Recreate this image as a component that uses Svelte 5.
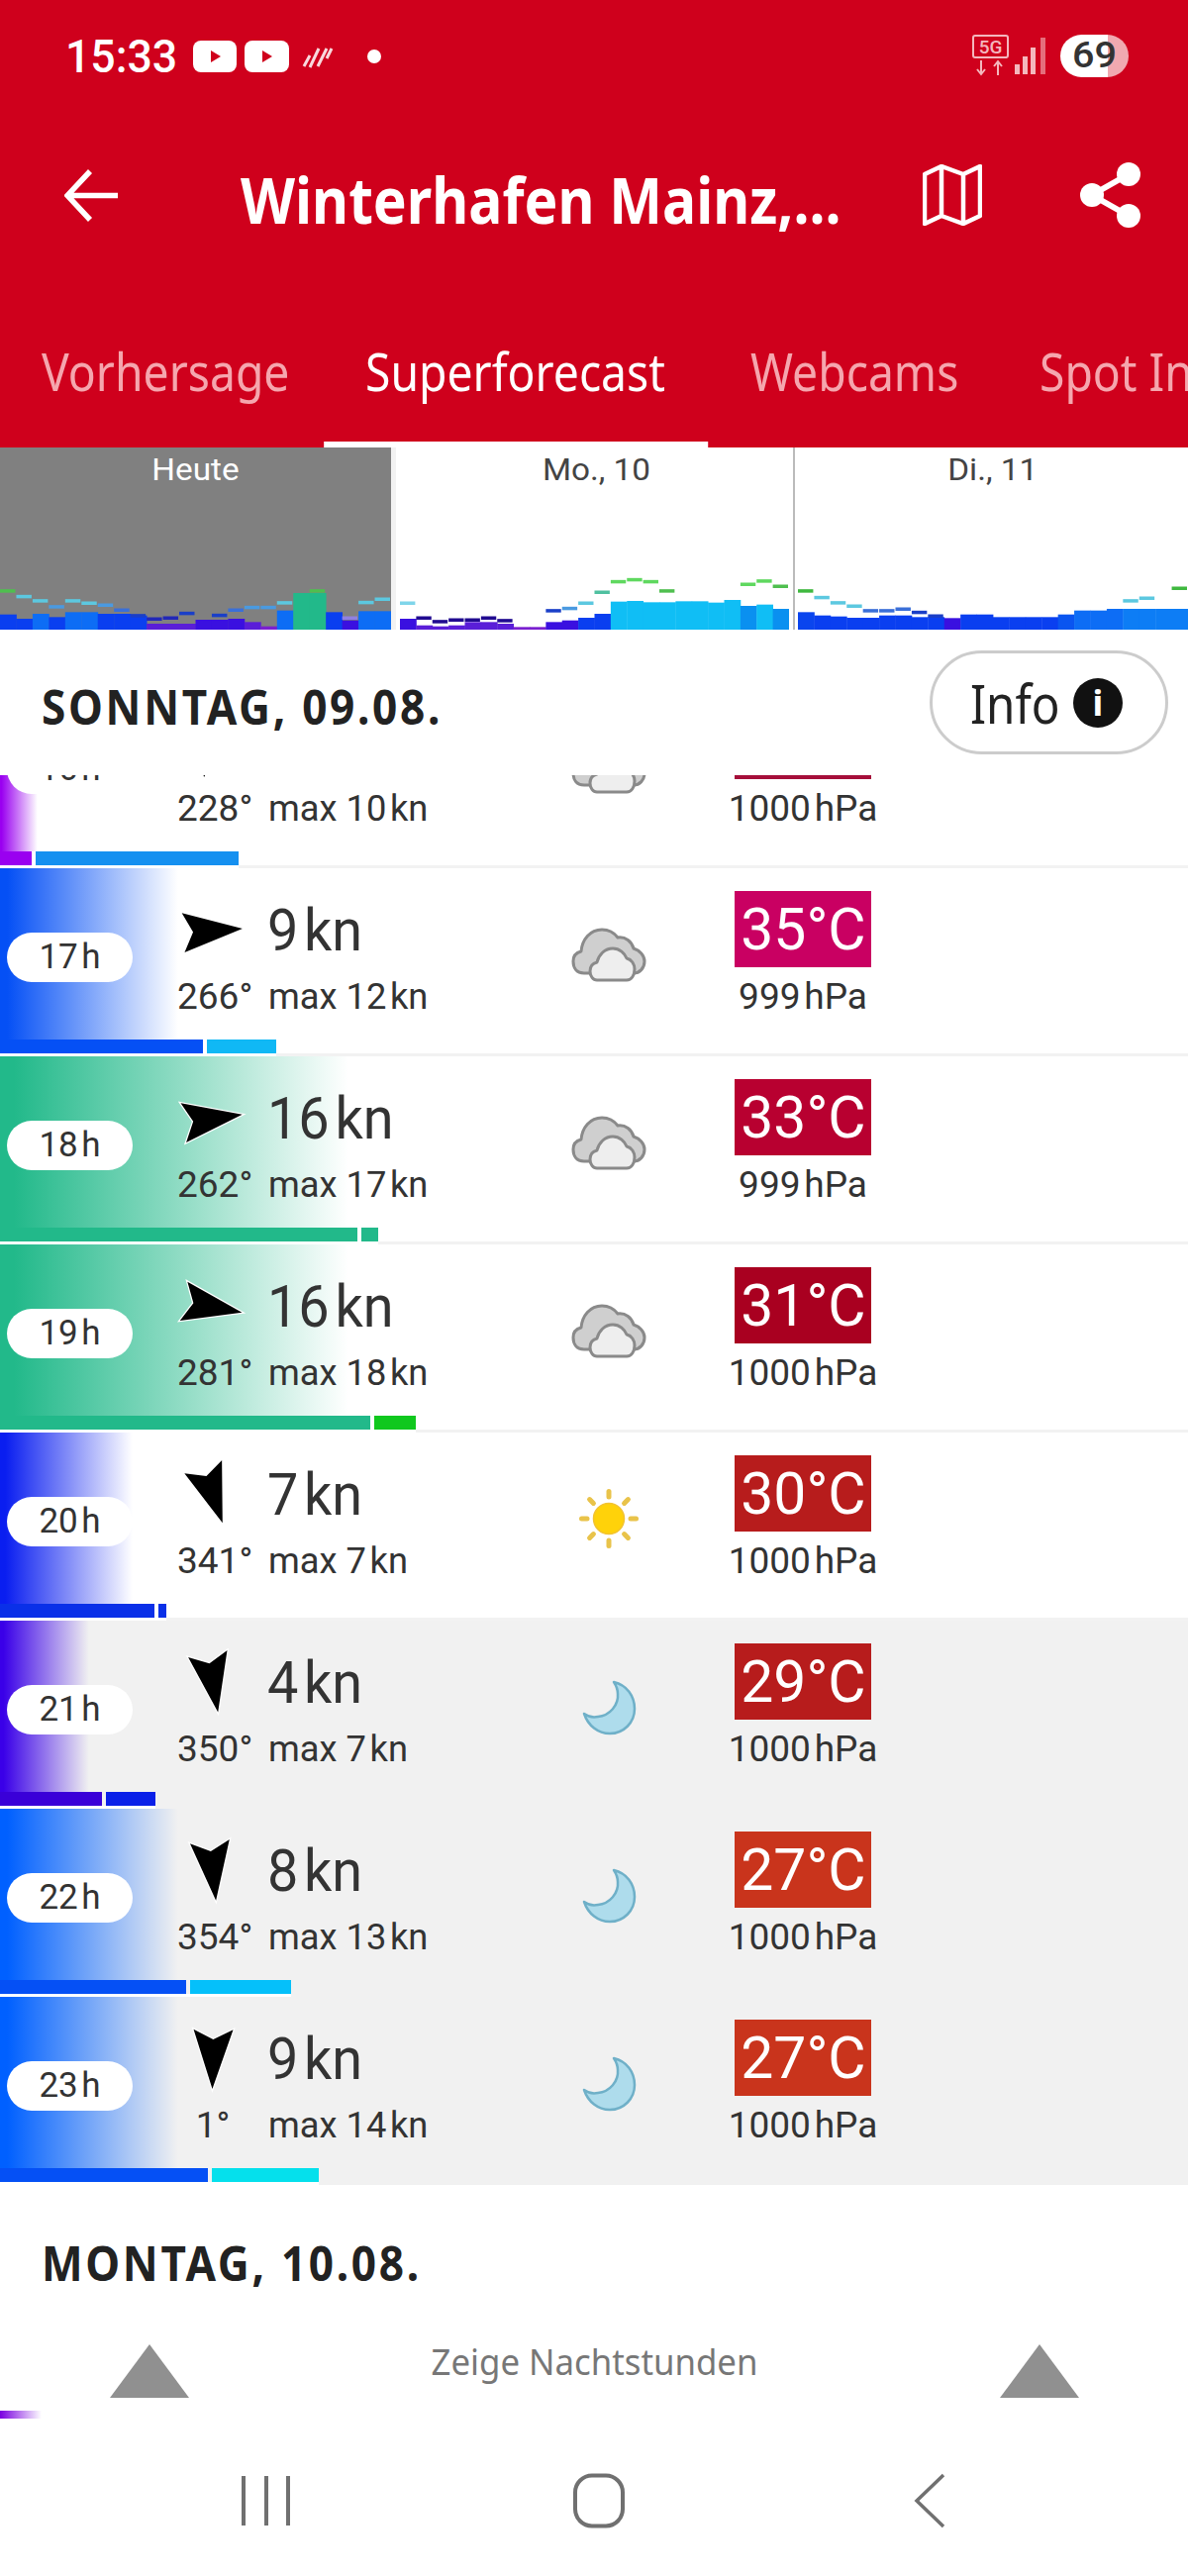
<script>
  const b='#0a3ff0',m='#0d6df5',p='#5a1ed8',v='#3a10e0',q='#7a20d0',g='#22b98a',c='#10bef5',s='#0a90f0';
  const G='#4fbf4f',H='#5fd85f',L='#5cc8e0',A='#4a9ae0',D='#3a6fd8',N='#1a3fc8',I='#2228b8',W='#9080e0',K='#200a90',T='#4fc0a0';
  const days=[
    {label:'Heute',cls:'today',w:395,off:0,
     bars:[[542,b],[555,b],[540,m],[550,b],[535,m],[535,m],[540,b],[540,b],[545,b],[570,p],[570,p],[570,p],[558,v],[558,v],[555,v],[565,p],[578,q],[530,m],[477,g],[477,g],[535,b],[560,v],[532,m],[532,m]],
     gust:[[470,G],[487,L],[500,L],[518,A],[500,L],[507,L],[513,A],[528,D],[545,N],[555,I],[552,I],[538,N],null,[544,N],[528,D],[520,A],[520,A],[506,L],null,[470,G],null,[552,W],[505,L],[495,L]]},
    {label:'Mo., 10',cls:'mon',w:393,off:4,
     bars:[[555,v],[575,p],[578,p],[575,p],[565,p],[565,p],[570,p],[580,q],[580,q],[565,v],[560,v],[552,b],[540,b],[503,c],[501,c],[505,c],[505,c],[502,c],[502,c],[506,c],[498,c],[516,s],[512,c],[525,s]],
     gust:[[507,'#7fd5ea'],[552,K],[563,K],[558,K],[558,K],[552,K],[560,K],null,null,[530,N],[523,A],[507,L],[474,T],[442,H],[436,H],[442,H],[470,G],null,null,null,null,[450,H],[440,H],[456,G]]},
    {label:'Di., 11',cls:'tue',w:394,off:4,
     bars:[[535,'#0a45ee'],[545,b],[548,b],[552,b],[552,b],[545,b],[545,b],[550,b],[550,b],[553,v],[542,b],[542,b],[550,b],[550,b],[550,b],[550,b],[542,'#0a55f0'],[530,m],[530,m],[525,m],[525,'#0d7df5'],[525,'#0d7df5'],[525,'#0d7df5'],[525,'#0d7df5']],
     gust:[[470,'#3fb83f'],[490,L],[506,L],[516,L],[530,D],[530,D],[525,D],[535,N],[546,N],null,null,null,null,null,null,null,null,null,null,null,[500,L],[492,L],null,[462,'#3fb83f']]}
  ];
  const rows=[
    {h:'16h',a:228,sp:'10',dir:'228°',max:'10',sky:'cloud',t:'32',tc:'#a50f3a',pr:'1000',c:'#9a00f0',gw:38,b1:32,b2:205,c1:'#9a00f0',c2:'#1590f0'},
    {h:'17h',a:266,sp:'9',dir:'266°',max:'12',sky:'cloud',t:'35',tc:'#c90062',pr:'999',c:'#0550f5',gw:180,b1:205,b2:70,c1:'#0550f5',c2:'#10b8f5'},
    {h:'18h',a:262,sp:'16',dir:'262°',max:'17',sky:'cloud',t:'33',tc:'#b80030',pr:'999',c:'#22b98a',gw:352,b1:361,b2:17,c1:'#22b98a',c2:'#22b98a'},
    {h:'19h',a:281,sp:'16',dir:'281°',max:'18',sky:'cloud',t:'31',tc:'#a90020',pr:'1000',c:'#22b98a',gw:352,b1:374,b2:42,c1:'#22b98a',c2:'#10c81e'},
    {h:'20h',a:341,sp:'7',dir:'341°',max:'7',sky:'sun',t:'30',tc:'#b71c1c',pr:'1000',c:'#0a1ef0',gw:134,b1:156,b2:8,c1:'#0a30e8',c2:'#0a30e8'},
    {h:'21h',a:350,sp:'4',dir:'350°',max:'7',sky:'moon',t:'29',tc:'#b71c1c',pr:'1000',c:'#3a00e8',gw:90,b1:103,b2:50,c1:'#3a00d8',c2:'#0a20e8',night:true},
    {h:'22h',a:354,sp:'8',dir:'354°',max:'13',sky:'moon',t:'27',tc:'#c9341c',pr:'1000',c:'#0060ff',gw:180,b1:188,b2:102,c1:'#0550f5',c2:'#05c0fa',night:true},
    {h:'23h',a:1,sp:'9',dir:'1°',max:'14',sky:'moon',t:'27',tc:'#c9341c',pr:'1000',c:'#0060ff',gw:180,b1:210,b2:108,c1:'#0550f5',c2:'#05e0ec',night:true}
  ];
  const rays=[0,45,90,135,180,225,270,315];
</script>

<div class="page">
  <header class="appbar">
    <div class="status">
      <span class="time">15:33</span>
      <svg class="st-left" width="200" height="40" viewBox="0 0 200 40" aria-hidden="true">
        <rect x="0" y="4" width="44" height="32" rx="8" fill="#fff"/><path d="M18 14l10 6-10 6z" fill="#cf001c"/>
        <rect x="52" y="4" width="45" height="32" rx="8" fill="#fff"/><path d="M70 14l10 6-10 6z" fill="#cf001c"/>
        <g stroke="#fff" stroke-width="3" fill="none" opacity=".85"><path d="M112 30l6-11M118 31l9-19M126 30l9-18M135 22l5-10"/></g>
        <circle cx="183" cy="20" r="7" fill="#fff"/>
      </svg>
      <svg class="st-right" width="80" height="44" viewBox="0 0 80 44" aria-hidden="true">
        <rect x="1" y="1" width="35" height="22" rx="2" fill="none" stroke="#f4b7bd" stroke-width="2"/>
        <text x="18.5" y="19" text-anchor="middle" font-family="Roboto,sans-serif" font-size="19" font-weight="500" fill="#f4b7bd">5G</text>
        <path d="M9 26v14M5 35l4 5 4-5M26 41V27M22 32l4-5 4 5" fill="none" stroke="#f4b7bd" stroke-width="2"/>
        <g fill="#f4b7bd"><rect x="43" y="30" width="5" height="10"/><rect x="51" y="22" width="5" height="18"/><rect x="59" y="13" width="5" height="27"/><rect x="69" y="3" width="5" height="37" opacity=".6"/></g>
      </svg>
      <span class="battery"><span class="batnum">69</span></span>
    </div>
    <div class="toolbar">
      <svg class="ic-back" width="54" height="53" viewBox="0 0 54 53" aria-hidden="true"><path d="M26 2L3 26.5 26 51M3 26.5h51" fill="none" stroke="#fff" stroke-width="5.5"/></svg>
      <h1 class="title"><span>Winterhafen Mainz,...</span></h1>
      <svg class="ic-map" width="60" height="62" viewBox="0 0 60 62" aria-hidden="true"><path d="M2 10l17-8 22 8 17-8v50l-17 8-22-8-17 8zM19 2v50M41 10v50" fill="none" stroke="#fff" stroke-width="4.5" stroke-linejoin="round"/></svg>
      <svg class="ic-share" width="62" height="68" viewBox="0 0 62 68" aria-hidden="true"><path d="M49 13L12 34l37 21" fill="none" stroke="#fff" stroke-width="6"/><circle cx="49" cy="13" r="12" fill="#fff"/><circle cx="12" cy="34" r="12" fill="#fff"/><circle cx="49" cy="55" r="12" fill="#fff"/></svg>
    </div>
    <nav class="tabs">
      <span class="tab t1">Vorhersage</span>
      <span class="tab t2 active">Superforecast</span>
      <span class="tab t3">Webcams</span>
      <span class="tab t4">Spot Info</span>
    </nav>
  </header>

  <section class="chart">
    {#each days as d}
      <div class="day {d.cls}">
        <span class="daylabel">{d.label}</span>
        <svg class="bars" width={d.w} height="60" viewBox="0 0 {d.w} 60" aria-hidden="true">
          {#each d.bars as bar,i}
            <rect x={i*d.w/24} y={60-(588-bar[0])/3} width={d.w/24+.4} height={(588-bar[0])/3} fill={bar[1]}/>
          {/each}
          {#each d.gust as gu,i}
            {#if gu}<rect x={i*d.w/24} y={60-(588-gu[0])/3-1.5} width={d.w/24-1} height="3.5" fill={gu[1]}/>{/if}
          {/each}
        </svg>
      </div>
    {/each}
  </section>

  <div class="dayhead">
    <h2 class="dayname"><span>SONNTAG, 09.08.</span></h2>
    <button class="info"><span class="infotxt">Info</span><span class="infoic">i</span></button>
  </div>

  <div class="list">
    <div class="rows">
      {#each rows as r}
        <article class="row" class:night={r.night}>
          <div class="grad" style="width:{r.gw}px;background:linear-gradient(90deg,{r.c} 4%,{r.c}00 100%)"></div>
          <div class="barline">
            <i style="width:{r.b1}px;background:{r.c1}"></i><i style="width:{r.b2}px;background:{r.c2}"></i>
          </div>
          <div class="hourcol"><span class="pill"><span class="sq">{r.h.slice(0,2)}&#8202;h</span></span></div>
          <div class="wind">
            <div class="l1">
              <span class="arrowcol">
                <svg width="72" height="70" viewBox="-36 -35 72 70" aria-hidden="true"><path d="M-20 -30L0 -20 20 -30 0 30Z" transform="rotate({r.a})" fill="#000" stroke="#fff" stroke-width="2.5" paint-order="stroke" stroke-linejoin="miter"/></svg>
              </span>
              <span class="speed">{r.sp}&#8202;kn</span>
            </div>
            <div class="l2">
              <span class="dir"><span class="sq">{r.dir}</span></span>
              <span class="max">max {r.max}&#8202;kn</span>
            </div>
          </div>
          <div class="sky">
            <svg width="74" height="74" viewBox="0 0 74 74" aria-hidden="true">
              {#if r.sky==='cloud'}
                <g transform="translate(0 11)" stroke="#8a8a8a" stroke-width="3" stroke-linejoin="round">
                  <path d="M12 45C4 45 1 39 1 33 1 27 5 24 9 23 10 11 18 1 30 1 38 1 43 5 46 9 54 8 60 13 62 20 68 22 73 27 73 33 73 40 68 45 62 45Z" fill="#cfcfcf"/>
                  <path d="M25 52C21 52 18 48 18 43 18 38 21 35 25 34 27 26 33 20 41 20 48 20 53 25 55 30 60 31 63 36 63 41 63 47 60 52 55 52Z" fill="#eeeeee"/>
                </g>
              {:else if r.sky==='sun'}
                {#each rays as a}<line x1="37" y1="15" x2="37" y2="9.5" transform="rotate({a} 37 37)" stroke="#e9c34a" stroke-width="5" stroke-linecap="round"/>{/each}
                <circle cx="37" cy="37" r="15.5" fill="#ffd20a" stroke="#f2c331" stroke-width="1.5"/>
              {:else}
                <path transform="translate(11 11)" d="M31 1C44 4 52 15 52 28 52 42 41 53 27 53 15 53 5 45 1 33 5 36 10 37 15 36 27 35 36 24 35 13 35 9 33 4 31 1Z" fill="#aedcec" stroke="#6fb0c8" stroke-width="2.5" stroke-linejoin="round"/>
              {/if}
            </svg>
          </div>
          <div class="tempcol">
            <div class="temp" style="background:{r.tc}"><span class="sq">{r.t}°C</span></div>
            <div class="press"><span class="sq">{r.pr}&#8202;hPa</span></div>
          </div>
        </article>
      {/each}
    </div>
  </div>

  <div class="nextday"><h2 class="dayname"><span>MONTAG, 10.08.</span></h2></div>

  <div class="nighttoggle">
    <span class="tri"></span>
    <span class="nt"><span>Zeige Nachtstunden</span></span>
    <span class="tri"></span>
  </div>
  <div class="dash"></div>

  <nav class="sysnav">
    <svg width="50" height="54" viewBox="0 0 50 54" aria-hidden="true"><path d="M3 2v50M26 2v50M48 2v50" stroke="#707070" stroke-width="4" fill="none"/></svg>
    <svg width="54" height="56" viewBox="0 0 54 56" aria-hidden="true"><rect x="3" y="2.5" width="48" height="51" rx="17" fill="none" stroke="#707070" stroke-width="4"/></svg>
    <svg width="32" height="56" viewBox="0 0 32 56" aria-hidden="true"><path d="M30 2L3 28l27 26" fill="none" stroke="#707070" stroke-width="3.5"/></svg>
  </nav>
</div>

<style>
  :global(body){margin:0;background:#fff}
  .page{width:1200px;height:2602px;overflow:hidden;position:relative;background:#fff;font-family:Roboto,"Liberation Sans",sans-serif;color:#333}
  span{display:inline-block}
  .sq{transform:scaleX(.85)}

  .appbar{height:452px;background:#cf001c;color:#fff;position:relative;overflow:hidden}
  .status{height:110px;display:flex;align-items:center;padding:3px 60px 0 66px;box-sizing:border-box}
  .time{font-size:46px;font-weight:500;width:129px;transform:scaleX(.97);transform-origin:left;line-height:50px}
  .st-left{flex:none}
  .st-right{flex:none;margin-left:auto;margin-right:9px}
  .battery{width:69px;height:43px;border-radius:22px;background:linear-gradient(90deg,#fff 70%,#f0a9b0 70%);color:#333;text-align:center;flex:none}
  .batnum{font-size:36px;font-weight:500;line-height:43px;transform:scaleX(1.1)}
  .toolbar{display:flex;align-items:center;height:90px;margin-top:42px;padding-left:65px}
  .ic-back{flex:none;margin-right:124px}
  .title{margin:10px 0 0;font-family:"Noto Sans",sans-serif;font-weight:700;font-size:64px;line-height:80px;width:689px;flex:none;white-space:nowrap}
  .title span{transform:scaleX(.89);transform-origin:left}
  .ic-map{flex:none;margin-right:99px}
  .ic-share{flex:none}
  .tabs{position:absolute;left:0;right:0;top:340px;height:112px;white-space:nowrap}
  .tab{position:absolute;top:0;font-family:"Noto Sans",sans-serif;font-size:52px;line-height:70px;color:#f5a6ae;transform:scaleX(.89);transform-origin:left}
  .tab.active{color:#fff}
  .t1{left:42px}.t2{left:369px}.t3{left:758px}.t4{left:1050px}
  .t2::after{content:'';position:absolute;left:-47px;width:436px;bottom:-42px;height:6px;background:#fff}

  .chart{display:flex;height:184px;background:#fff}
  .day{position:relative;display:flex;flex-direction:column;justify-content:space-between;box-sizing:border-box;overflow:hidden;flex:none}
  .today{width:400px;background:#808080;border-right:5px solid #f2f2f2;color:#fff}
  .mon{width:403px;border-right:2px solid #bbb;padding-left:4px;color:#444}
  .tue{width:397px;padding-left:3px;color:#444}
  .daylabel{font-size:32px;line-height:38px;margin-top:3px;align-self:center;transform:scaleX(1.04);white-space:nowrap}
  .bars{flex:none;display:block}

  .dayhead{height:147px;box-sizing:border-box;display:flex;justify-content:space-between;align-items:center;padding:0 20px 0 42px}
  .dayname{margin:6px 0 0;font-family:"Noto Sans",sans-serif;font-weight:700;font-size:49px;letter-spacing:3px;color:#222;white-space:nowrap;line-height:60px}
  .dayname span{transform:scaleX(.9);transform-origin:left}
  .info{width:241px;height:105px;border-radius:53px;border:3px solid #ccc;background:#fff;padding:0 0 0 38px;display:flex;align-items:center;box-sizing:border-box;color:#222}
  .infotxt{font-family:"Noto Sans",sans-serif;font-size:54px;line-height:60px;width:90px;transform:scaleX(.88);transform-origin:left}
  .infoic{width:50px;height:50px;border-radius:50%;background:#111;color:#fff;font-family:"Noto Sans",sans-serif;font-weight:700;font-size:36px;line-height:50px;text-align:center;margin-left:14px}

  .list{height:1424px;overflow:hidden}
  .rows{margin-top:-96px}
  .row{position:relative;height:190px;box-sizing:border-box;border-bottom:3px solid #f2f2f2;display:flex;align-items:flex-start;background:#fff}
  .row.night{background:#f1f1f1;border-bottom-color:#f1f1f1}
  .grad{position:absolute;left:0;top:0;height:173px}
  .barline{position:absolute;left:0;top:173px;height:14px;display:flex;gap:4px;box-shadow:0 3px 0 #fff}
  .barline i{display:block;height:14px}
  .hourcol{position:relative;width:179px;flex:none;padding-top:65px;padding-left:7px;box-sizing:border-box}
  .pill{width:127px;height:50px;border-radius:25px;background:#fff;text-align:center;font-size:35px;line-height:50px;color:#333}
  .pill .sq{transform:scaleX(1)}
  .wind{position:relative;width:399px;flex:none;padding-top:28px}
  .l1{display:flex;height:70px;align-items:center}
  .arrowcol{width:72px;height:70px;flex:none}
  .arrowcol svg{display:block}
  .speed{margin-left:19px;font-size:60px;line-height:70px;transform:scaleX(.93);transform-origin:left;white-space:nowrap}
  .l2{display:flex;margin-top:10px;height:44px;font-size:37px;line-height:44px;white-space:nowrap}
  .dir{width:72px;text-align:center;flex:none}
  .dir .sq{transform:scaleX(1)}
  .max{margin-left:20px;transform:scaleX(.98);transform-origin:left}
  .sky{position:relative;width:74px;flex:none;padding-top:50px}
  .sky svg{display:block;overflow:visible}
  .tempcol{position:relative;margin-left:90px;width:138px;flex:none;padding-top:23px;text-align:center}
  .temp{height:77px;color:#fff;font-size:60px;line-height:77px;white-space:nowrap}
  .temp .sq{transform:scaleX(.98)}
  .press{margin-top:8px;font-size:37px;line-height:44px;white-space:nowrap;margin-left:-20px;margin-right:-20px}
  .press .sq{transform:scaleX(1)}

  .nextday{height:135px;box-sizing:border-box;padding:42px 42px 0}
  .nighttoggle{display:flex;justify-content:space-between;padding:0 110px 0 111px;height:80px;box-sizing:border-box;margin-top:26px;align-items:flex-start}
  .tri{width:0;height:0;border-left:40px solid transparent;border-right:40px solid transparent;border-bottom:54px solid #909090}
  .nt{font-family:"Noto Sans",sans-serif;font-size:37px;line-height:44px;color:#777;white-space:nowrap;margin-top:-5px}
  .nt span{transform:scaleX(.94)}
  .dash{width:42px;height:8px;margin-top:-13px;background:linear-gradient(90deg,#7a00e0,#7a00e000)}
  .sysnav{position:absolute;left:0;right:0;top:2497px;height:58px;display:flex;align-items:center;padding-left:243px}
  .sysnav svg:nth-child(1){margin-right:285px}
  .sysnav svg:nth-child(2){margin-right:291px}
</style>
